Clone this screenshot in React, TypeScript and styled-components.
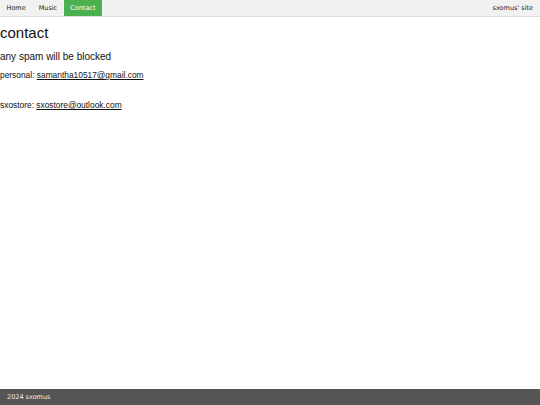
import styled, { createGlobalStyle } from "styled-components";

const GlobalStyle = createGlobalStyle`
  html, body {
    margin: 0;
    padding: 0;
    background: #fff;
  }
`;

const Page = styled.div`
  display: flex;
  flex-direction: column;
  min-height: 100vh;
  font-family: "Liberation Sans", Arial, sans-serif;
  color: #111;
`;

const NavBar = styled.nav`
  display: flex;
  align-items: stretch;
  height: 16px;
  padding-left: 0;
  background: #f1f1f1;
  border-bottom: 1px solid #dcdcdc;
  font-family: "DejaVu Sans", Verdana, sans-serif;
  font-size: 6.5px;
`;

const NavItem = styled.a<{ $active?: boolean }>`
  display: flex;
  align-items: center;
  padding: 0 6.5px;
  color: ${(p) => (p.$active ? "#fff" : "#222")};
  background: ${(p) => (p.$active ? "#4caf50" : "transparent")};
  text-decoration: none;
`;

const SiteName = styled.span`
  margin-left: auto;
  display: flex;
  align-items: center;
  padding: 0 7px;
  color: #222;
`;

const Main = styled.main`
  flex: 1;
`;

const Title = styled.h1`
  margin: 7px 0 0;
  font-size: 15px;
  font-weight: normal;
  line-height: 17px;
`;

const Subtitle = styled.h3`
  margin: 10px 0 0;
  font-size: 10px;
  font-weight: normal;
  line-height: 12px;
`;

const Line = styled.p<{ $gap: number }>`
  margin: ${(p) => p.$gap}px 0 0;
  font-size: 8.4px;
  line-height: 10px;
`;

const Mail = styled.a`
  color: #111;
  text-decoration: underline;
`;

const Footer = styled.footer`
  display: flex;
  align-items: center;
  height: 16px;
  padding: 0 7px;
  background: #555;
  color: #eee;
  font-family: "DejaVu Sans", Verdana, sans-serif;
  font-size: 6.5px;
`;

export default function App() {
  return (
    <Page>
      <GlobalStyle />
      <NavBar>
        <NavItem href="#">Home</NavItem>
        <NavItem href="#">Music</NavItem>
        <NavItem href="#" $active>
          Contact
        </NavItem>
        <SiteName>sxomus' site</SiteName>
      </NavBar>
      <Main>
        <Title>contact</Title>
        <Subtitle>any spam will be blocked</Subtitle>
        <Line $gap={7}>
          personal: <Mail href="#">samantha10517@gmail.com</Mail>
        </Line>
        <Line $gap={20}>
          sxostore: <Mail href="#">sxostore@outlook.com</Mail>
        </Line>
      </Main>
      <Footer>2024 sxomus</Footer>
    </Page>
  );
}
